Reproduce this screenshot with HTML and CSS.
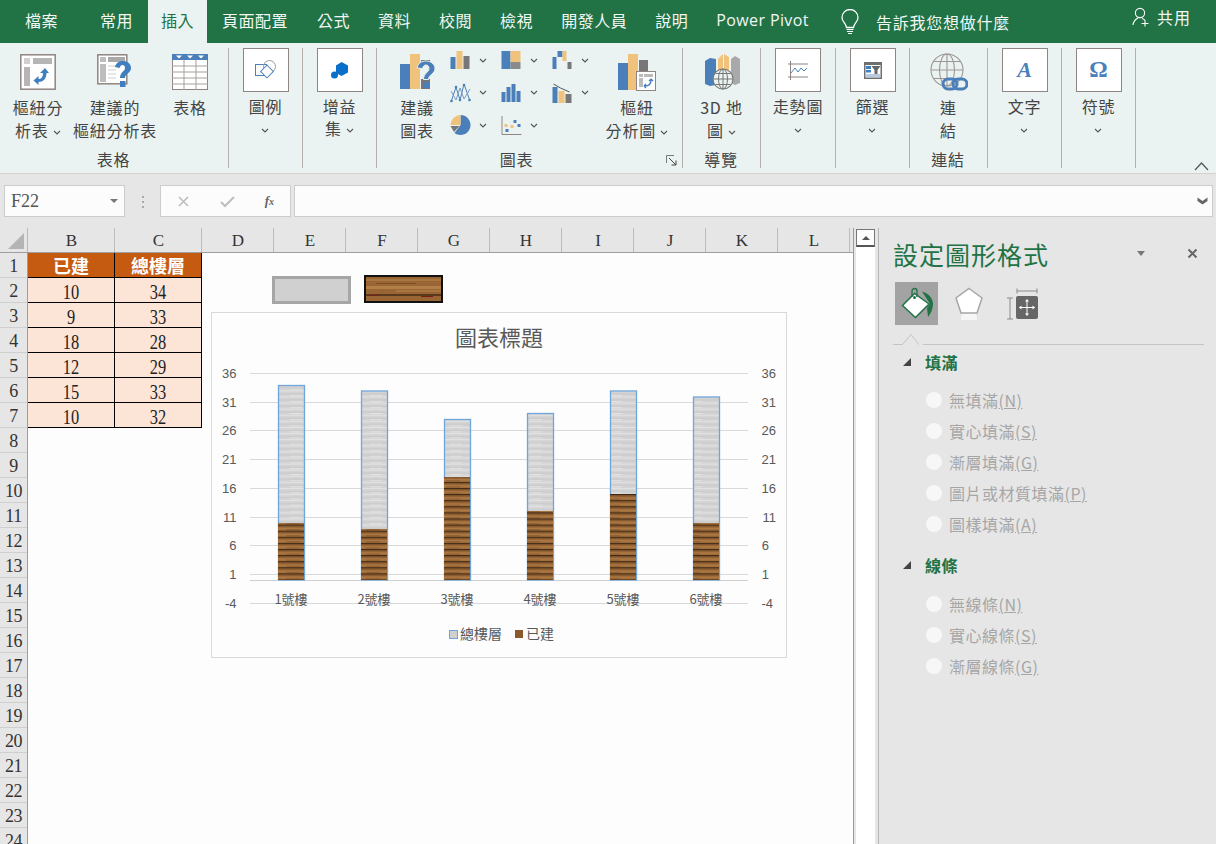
FILE: index.html
```html
<!DOCTYPE html>
<html lang="zh-Hant">
<head>
<meta charset="utf-8">
<title>Excel</title>
<link rel="stylesheet" href="styles.css">
</head>
<body>
<svg class="defs" width="0" height="0" aria-hidden="true">
  <defs>
    <symbol id="chev" viewBox="0 0 8 5"><polyline points="1,1 4,4 7,1" fill="none" stroke="#555" stroke-width="1.1"/></symbol>
    <pattern id="wood" width="40" height="6.1" patternUnits="userSpaceOnUse">
      <rect width="40" height="6.1" fill="#a06c3a"/>
      <rect y="0" width="40" height="1.2" fill="#3f2a16"/>
      <rect y="1.2" width="40" height="1" fill="#7a5029"/>
      <rect y="3.4" width="40" height="1.3" fill="#ad7a44"/>
      <rect x="6" y="4.6" width="14" height="1" fill="#8a5c30"/>
    </pattern>
    <pattern id="stone" width="40" height="6.1" patternUnits="userSpaceOnUse">
      <rect width="40" height="6.1" fill="#d4d4d4"/>
      <rect y="0" width="40" height="1" fill="#e2e2e2"/>
      <rect y="3" width="40" height="1" fill="#c8c8c8"/>
      <rect x="10" y="4.6" width="12" height="0.8" fill="#e6e6e6"/>
    </pattern>
    <pattern id="woodwide" width="75" height="24" patternUnits="userSpaceOnUse">
      <rect width="75" height="24" fill="#9a6534"/>
      <rect y="2" width="75" height="2" fill="#a8763f"/>
      <rect x="10" y="6" width="40" height="1" fill="#7b4e26"/>
      <rect y="9" width="75" height="3" fill="#b27f49"/>
      <rect x="30" y="13" width="45" height="2" fill="#a8763f"/>
      <rect y="17" width="75" height="2" fill="#5a3a1c"/>
      <rect x="3" y="18" width="9" height="1" fill="#7a1f14"/>
      <rect x="55" y="19" width="12" height="1" fill="#7a1f14"/>
    </pattern>
  </defs>
</svg>

<header class="tabbar">
  <nav class="tabs">
    <span class="tab tab-file">檔案</span>
    <span class="tab">常用</span>
    <span class="tab active">插入</span>
    <span class="tab tab4">頁面配置</span>
    <span class="tab">公式</span>
    <span class="tab">資料</span>
    <span class="tab">校閱</span>
    <span class="tab">檢視</span>
    <span class="tab">開發人員</span>
    <span class="tab">說明</span>
    <span class="tab tab-latin">Power Pivot</span>
  </nav>
  <div class="tell">
    <svg width="18" height="26" viewBox="0 0 18 26"><path d="M5.5 18.5C5 14 1 13 1 8.5a8 8 0 0 1 16 0c0 4.500-4 5.500-4.500 10z" fill="none" stroke="#fff" stroke-width="1.3"/><path d="M5.500 20.500h7M6 22.500h6M7 24.500h4" stroke="#fff" stroke-width="1.200"/></svg>
    <span>告訴我您想做什麼</span>
  </div>
  <div class="share">
    <svg width="18" height="20" viewBox="0 0 18 20"><circle cx="8" cy="6" r="4.600" fill="none" stroke="#fff" stroke-width="1.100"/><path d="M1 18c.5-4 3-6 5-7M10 11.500c1 .3 2 .8 2.700 1.500" fill="none" stroke="#fff" stroke-width="1.100"/><path d="M13 13v6.500M9.500 16.500h7" stroke="#fff" stroke-width="1.100"/></svg>
    <span>共用</span>
  </div>
</header>

<section class="ribbon">
  <div class="group g1">
    <div class="tools t1">
      <div class="btn b1">
        <div class="ico">
          <svg width="36" height="36" viewBox="0 0 36 36"><rect x=".8" y=".8" width="34.400" height="34.400" fill="#fff" stroke="#8f8582" stroke-width="1.500"/><rect x="4" y="4" width="6" height="6" fill="#cfcfcf"/><rect x="13" y="4" width="19" height="6" fill="#b5b5b5"/><rect x="4" y="13" width="6" height="19" fill="#b5b5b5"/><path d="M25 14l4 5h-2.500c0 6-3.500 9-8 9v3l-5-4.500 5-4.500v3c3 0 4.500-2 4.500-6H20z" fill="#3f7fc0"/></svg>
        </div>
        <div class="lbl">樞紐分<br>析表 <svg class="chev"><use href="#chev"/></svg></div>
      </div>
      <div class="btn b2">
        <div class="ico">
          <svg width="36" height="36" viewBox="0 0 36 36"><rect x=".8" y=".8" width="29" height="29" fill="#fff" stroke="#8f8582" stroke-width="1.500"/><rect x="3" y="3" width="6" height="5" fill="#bdbdbd"/><rect x="11" y="3" width="17" height="5" fill="#a9a9a9"/><rect x="3" y="10" width="6" height="18" fill="#bdbdbd"/><path d="M11 12h13M11 16h8M11 20h8M11 24h8" stroke="#cfcfcf"/><path d="M18 13c1-4 4-6 8-6s8 2.500 8 7c0 5-6 5.500-6 10h-5c0-6 5-6.500 5-10 0-2-1-3-2.500-3s-2.500 1-3 3z" fill="#3f7fc0"/><rect x="23" y="27" width="5.500" height="6" fill="#3f7fc0"/></svg>
        </div>
        <div class="lbl">建議的<br>樞紐分析表</div>
      </div>
      <div class="btn b3">
        <div class="ico">
          <svg width="36" height="36" viewBox="0 0 36 36"><rect x=".5" y=".5" width="35" height="35" fill="#fff" stroke="#8f8582"/><rect width="36" height="6" fill="#4a7fba"/><path d="M4 1.500h6l-3 3zM15 1.500h6l-3 3zM26 1.500h6l-3 3z" fill="#fff"/><path d="M12 6v30M24 6v30M0 12h36M0 18h36M0 24h36M0 30h36" stroke="#a79f9c"/></svg>
        </div>
        <div class="lbl">表格</div>
      </div>
    </div>
    <div class="grp-label">表格</div>
  </div>

  <div class="group g2">
    <div class="tools">
      <div class="btn boxed">
        <div class="box">
          <svg width="22" height="20" viewBox="0 0 22 20"><rect x=".5" y="4.500" width="11" height="11" fill="none" stroke="#4a7fba"/><circle cx="14.500" cy="6.500" r="6" fill="none" stroke="#a09a98"/><rect x="7.500" y="7" width="9" height="9" transform="rotate(45 12 11.500)" fill="#fff" stroke="#4a7fba"/></svg>
        </div>
        <div class="lbl">圖例<br><svg class="chev"><use href="#chev"/></svg></div>
      </div>
    </div>
  </div>

  <div class="group g3">
    <div class="tools">
      <div class="btn boxed">
        <div class="box">
          <svg width="17" height="17" viewBox="0 0 17 17"><path d="M10.500 0l6.500 3.500v7L10.500 14 5 11V3.500z" fill="#0a6fc9"/><circle cx="3.500" cy="13" r="3.500" fill="#0a6fc9"/></svg>
        </div>
        <div class="lbl">增益<br>集 <svg class="chev"><use href="#chev"/></svg></div>
      </div>
    </div>
  </div>

  <div class="group g4">
    <div class="tools t4">
      <div class="btn b4a">
        <div class="ico">
          <svg width="36" height="38" viewBox="0 0 36 38"><rect x="0" y="11" width="10" height="25" fill="#4a7fba"/><rect x="10" y="1" width="10" height="35" fill="#f0c27c"/><rect x="21" y="7" width="9" height="2" fill="#777"/><rect x="21" y="26" width="9" height="10" fill="#777"/><path d="M17 15c1-5 5-7 9-7s9 2.500 9 7.500c0 5.500-6.500 6-6.500 11h-5c0-6.500 5.500-7 5.500-11 0-2-1-3.500-3-3.500s-3 1.500-3.500 3.500z" fill="#4a7fba" stroke="#eaf2f0"/><rect x="23.500" y="29" width="5.500" height="6" fill="#4a7fba"/></svg>
        </div>
        <div class="lbl">建議<br>圖表</div>
      </div>
      <div class="mini-grid">
        <div class="mini"><svg width="20" height="18" viewBox="0 0 20 18"><rect y="6" width="5" height="12" fill="#4a7fba"/><rect x="6" y="0" width="6" height="18" fill="#f0c27c"/><rect x="13" y="5" width="6" height="13" fill="#777"/></svg><svg class="chev"><use href="#chev"/></svg></div>
        <div class="mini"><svg width="20" height="19" viewBox="0 0 20 19"><rect width="9" height="18" fill="#4a7fba"/><rect x="9" width="10" height="11" fill="#f0c27c"/><rect x="9" y="11" width="10" height="7" fill="#8a8a8a"/></svg><svg class="chev"><use href="#chev"/></svg></div>
        <div class="mini"><svg width="20" height="18" viewBox="0 0 20 18"><path d="M0 6h4v12H0z" fill="#4a7fba"/><path d="M5 0h5v6H5z" fill="#4a7fba"/><path d="M10 0h4v10h-4z" fill="#f0c27c"/><path d="M15 11h4v7h-4z" fill="#777"/></svg><svg class="chev"><use href="#chev"/></svg></div>
        <div class="mini"><svg width="21" height="20" viewBox="0 0 21 20"><polyline points="1,19 6,4 10,17 14,1 20,18" fill="none" stroke="#4a7fba"/><polyline points="1,8 6,17 10,5 14,16 20,6" fill="none" stroke="#7a9cc4"/><g fill="#4a7fba"><circle cx="1.500" cy="18" r="1.300"/><circle cx="6" cy="4" r="1.300"/><circle cx="10" cy="17" r="1.300"/><circle cx="14" cy="2" r="1.300"/><circle cx="19.500" cy="17" r="1.300"/></g></svg><svg class="chev"><use href="#chev"/></svg></div>
        <div class="mini"><svg width="20" height="18" viewBox="0 0 20 18"><path d="M0 8h4v10H0zM5 3h4v15H5zM10 0h4v18h-4zM15 7h4v11h-4z" fill="#4a7fba"/></svg><svg class="chev"><use href="#chev"/></svg></div>
        <div class="mini"><svg width="20" height="20" viewBox="0 0 20 20"><rect y="4" width="5" height="16" fill="#4a7fba"/><rect x="6" y="8" width="6" height="12" fill="#f0c27c"/><rect x="13" y="11" width="6" height="9" fill="#777"/><polyline points="1,1 8,5 17,9" fill="none" stroke="#555"/></svg><svg class="chev"><use href="#chev"/></svg></div>
        <div class="mini"><svg width="20" height="20" viewBox="0 0 20 20"><path d="M10 0a10 10 0 1 1-6 18l6-8z" fill="#4a7fba"/><path d="M10 0v10H0A10 10 0 0 1 10 0z" fill="#f0c27c"/><path d="M0 11h9l-5.500 6z" fill="#777"/></svg><svg class="chev"><use href="#chev"/></svg></div>
        <div class="mini"><svg width="20" height="19" viewBox="0 0 20 19"><path d="M.5 0v18.500H20" fill="none" stroke="#8f8582"/><path d="M3 8h3v3H3zM9 9h3v3H9z" fill="#f0c27c"/><path d="M12 4h3v3h-3zM16 8h3v3h-3zM4 13h3v3H4z" fill="#4a7fba"/></svg><svg class="chev"><use href="#chev"/></svg></div>
      </div>
      <div class="btn b4b">
        <div class="ico">
          <svg width="38" height="38" viewBox="0 0 38 38"><rect x="0" y="10" width="10" height="27" fill="#4a7fba"/><rect x="10" y="1" width="10" height="36" fill="#f0c27c"/><rect x="21" y="7" width="9" height="13" fill="#777"/><rect x="18.500" y="18.500" width="19" height="19" fill="#fff" stroke="#8f8582"/><rect x="21" y="21" width="4" height="3" fill="#bbb"/><rect x="26" y="21" width="9" height="3" fill="#bbb"/><rect x="21" y="25" width="4" height="9" fill="#bbb"/><path d="M27 33c4 0 6-2 6-6M33 26l-2 2M33 26l2 2M26 33l2-2M26 33l2 2" fill="none" stroke="#3f7fc0" stroke-width="1.300"/></svg>
        </div>
        <div class="lbl">樞紐<br>分析圖 <svg class="chev"><use href="#chev"/></svg></div>
      </div>
    </div>
    <div class="grp-label gl4">圖表<svg class="launcher" width="11" height="11" viewBox="0 0 11 11"><path d="M.5 8V.5H8" fill="none" stroke="#777"/><path d="M3 3l7 7M10 5.500V10H5.500" fill="none" stroke="#444"/></svg></div>
  </div>

  <div class="group g5">
    <div class="tools">
      <div class="btn b5">
        <div class="ico">
          <svg width="36" height="36" viewBox="0 0 36 36"><path d="M1 7l5-3 6 1v26l-6 1-5-2z" fill="#4a7fba"/><path d="M14 5l5-5v22l-5 3z" fill="#f0c27c"/><path d="M20 0l5 3v19h-5z" fill="#f0c27c"/><path d="M27 5l4-3 5 3v24l-5 2-4-2z" fill="#a9a9a9"/><circle cx="19" cy="25" r="10" fill="#eaf3f1" stroke="#777" stroke-width="1.100"/><ellipse cx="19" cy="25" rx="4.500" ry="10" fill="none" stroke="#777"/><path d="M9 25h20M19 15v20M11.500 19.500h15M11.500 30.500h15" stroke="#777" fill="none"/></svg>
        </div>
        <div class="lbl">3D 地<br>圖 <svg class="chev"><use href="#chev"/></svg></div>
      </div>
    </div>
    <div class="grp-label">導覽</div>
  </div>

  <div class="group g6">
    <div class="tools">
      <div class="btn boxed">
        <div class="box">
          <svg width="20" height="19" viewBox="0 0 20 19"><path d="M2.500 0v19M0 3h20M0 16h20" stroke="#8f8582" fill="none"/><polyline points="3,12 7,7 10,11 13,7 16,10 19,7" fill="none" stroke="#4a7fba"/></svg>
        </div>
        <div class="lbl nowrap">走勢圖<br><svg class="chev"><use href="#chev"/></svg></div>
      </div>
    </div>
  </div>

  <div class="group g7">
    <div class="tools">
      <div class="btn boxed">
        <div class="box">
          <svg width="18" height="17" viewBox="0 0 18 17"><rect width="18" height="17" fill="#6f6f6f"/><rect x="1.500" y="3" width="15" height="12.500" fill="#fff"/><rect x="2" y="4" width="5" height="3" fill="#3f7fc0"/><rect x="2" y="8" width="5" height="2.500" fill="#3f7fc0"/><rect x="2" y="12" width="14" height="3" fill="#b7cbe0"/><path d="M7.500 4h9L13.500 8v4h-3V8z" fill="#666"/></svg>
        </div>
        <div class="lbl">篩選<br><svg class="chev"><use href="#chev"/></svg></div>
      </div>
    </div>
  </div>

  <div class="group g8">
    <div class="tools">
      <div class="btn b8">
        <div class="ico">
          <svg width="38" height="38" viewBox="0 0 38 38"><g fill="none" stroke="#9d9795" stroke-width="1.100"><circle cx="17" cy="17" r="16"/><ellipse cx="17" cy="17" rx="7.500" ry="16"/><path d="M17 1v32M1 17h32M4 8.500h26M4 25.500h26"/></g><rect x="13" y="26" width="14" height="10" rx="5" fill="none" stroke="#4a7fba" stroke-width="3"/><rect x="23" y="26" width="14" height="10" rx="5" fill="none" stroke="#4a7fba" stroke-width="3"/></svg>
        </div>
        <div class="lbl">連<br>結</div>
      </div>
    </div>
    <div class="grp-label">連結</div>
  </div>

  <div class="group g9">
    <div class="tools">
      <div class="btn boxed">
        <div class="box"><span class="glyph-a">A</span></div>
        <div class="lbl">文字<br><svg class="chev"><use href="#chev"/></svg></div>
      </div>
    </div>
  </div>

  <div class="group g10">
    <div class="tools">
      <div class="btn boxed">
        <div class="box"><span class="glyph-o">Ω</span></div>
        <div class="lbl">符號<br><svg class="chev"><use href="#chev"/></svg></div>
      </div>
    </div>
  </div>

  <svg class="collapse" width="15" height="9" viewBox="0 0 15 9"><polyline points="1,8 7.500,1 14,8" fill="none" stroke="#555" stroke-width="1.200"/></svg>
</section>

<section class="formula">
  <div class="namebox"><span>F22</span><i class="tri"></i></div>
  <div class="dots"><b></b><b></b><b></b></div>
  <div class="fxbox">
    <svg width="13" height="13" viewBox="0 0 13 13"><path d="M2 2l9 9M11 2l-9 9" stroke="#bdbdbd" stroke-width="1.600"/></svg>
    <svg width="15" height="13" viewBox="0 0 15 13"><path d="M1 7l4 4 9-9" fill="none" stroke="#bdbdbd" stroke-width="2"/></svg>
    <span class="fx">f<small>x</small></span>
  </div>
  <div class="input"><svg width="11" height="8" viewBox="0 0 11 8"><path d="M.5 .5L5.500 4l5-3.500V4l-5 3.500L.5 4z" fill="#666"/></svg></div>
</section>

<main class="workspace">
  <div class="sheet">
    <div class="colhead">
      <div class="corner"><i></i></div>
      <div class="col wide">B</div><div class="col wide">C</div>
      <div class="col">D</div><div class="col">E</div><div class="col">F</div><div class="col">G</div><div class="col">H</div><div class="col">I</div><div class="col">J</div><div class="col">K</div><div class="col">L</div>
    </div>
    <div class="sheet-body">
      <div class="rowhead">
        <div>1</div><div>2</div><div>3</div><div>4</div><div>5</div><div>6</div><div>7</div><div>8</div><div>9</div><div>10</div><div>11</div><div>12</div><div>13</div><div>14</div><div>15</div><div>16</div><div>17</div><div>18</div><div>19</div><div>20</div><div>21</div><div>22</div><div>23</div><div>24</div>
      </div>
      <div class="canvas">
        <div class="data">
          <div class="th">已建</div><div class="th">總樓層</div>
          <div class="td"><span>10</span></div><div class="td"><span>34</span></div>
          <div class="td"><span>9</span></div><div class="td"><span>33</span></div>
          <div class="td"><span>18</span></div><div class="td"><span>28</span></div>
          <div class="td"><span>12</span></div><div class="td"><span>29</span></div>
          <div class="td"><span>15</span></div><div class="td"><span>33</span></div>
          <div class="td"><span>10</span></div><div class="td"><span>32</span></div>
        </div>
        <div class="swatch sw-stone"></div>
        <div class="swatch sw-wood"><svg width="75" height="24"><rect width="75" height="24" fill="url(#woodwide)"/></svg></div>
        <div class="chart">
          <svg width="576" height="346" viewBox="211 312 576 346">
            <g stroke="#d9d9d9" stroke-width="1">
              <path d="M250 373.500H748M250 402.500H748M250 430.500H748M250 459.500H748M250 488.500H748M250 517.500H748M250 545.500H748M250 574.500H748M250 603.500H748"/>
              <path d="M250 580.500H748" stroke="#cfcfcf"/>
            </g>
            <g fill="url(#stone)" stroke="#6ea6dc" stroke-width="1.300">
              <rect x="278.500" y="385.500" width="26" height="194.500"/>
              <rect x="361.500" y="391" width="26" height="189"/>
              <rect x="444.500" y="419.500" width="26" height="160.500"/>
              <rect x="527.500" y="413.500" width="26" height="166.500"/>
              <rect x="610.500" y="391" width="26" height="189"/>
              <rect x="693.500" y="397" width="26" height="183"/>
            </g>
            <g fill="url(#wood)">
              <rect x="278" y="523" width="26" height="57"/>
              <rect x="361" y="529" width="26" height="51"/>
              <rect x="444" y="477" width="26" height="103"/>
              <rect x="527" y="511" width="26" height="69"/>
              <rect x="610" y="494" width="26" height="86"/>
              <rect x="693" y="523" width="26" height="57"/>
            </g>
            <g class="ax" text-anchor="end">
              <text x="236.500" y="378">36</text><text x="236.500" y="407">31</text><text x="236.500" y="435">26</text><text x="236.500" y="464">21</text><text x="236.500" y="493">16</text><text x="236.500" y="522">11</text><text x="236.500" y="550">6</text><text x="236.500" y="579">1</text><text x="236.500" y="608">-4</text>
            </g>
            <g class="ax" text-anchor="end">
              <text x="776" y="378">36</text><text x="776" y="407">31</text><text x="776" y="435">26</text><text x="776" y="464">21</text><text x="776" y="493">16</text><text x="776" y="522">11</text><text x="769" y="550">6</text><text x="769" y="579">1</text><text x="773" y="608">-4</text>
            </g>
            <g class="cat" text-anchor="middle">
              <text x="291" y="604">1號樓</text><text x="374" y="604">2號樓</text><text x="457" y="604">3號樓</text><text x="540" y="604">4號樓</text><text x="623" y="604">5號樓</text><text x="706" y="604">6號樓</text>
            </g>
            <text class="ctitle" x="499" y="345.500" text-anchor="middle">圖表標題</text>
            <rect x="449.500" y="630.500" width="8" height="8" fill="#d0d0d0" stroke="#6ea6dc"/>
            <text class="leg" x="460" y="639">總樓層</text>
            <rect x="515" y="630" width="8" height="8" fill="#8a5a2e"/>
            <text class="leg" x="526" y="639">已建</text>
          </svg>
        </div>
      </div>
    </div>
  </div>

  <div class="vscroll"><div class="sb-btn"><i></i></div></div>

  <aside class="pane">
    <div class="pane-head">
      <h2>設定圖形格式</h2>
      <i class="pane-tri"></i>
      <svg class="pane-x" width="11" height="11" viewBox="0 0 11 11"><path d="M1.500 1.500l8 8M9.500 1.500l-8 8" stroke="#666" stroke-width="2"/></svg>
    </div>
    <div class="pane-icons">
      <div class="pi selected">
        <svg width="34" height="34" viewBox="0 0 34 34"><path d="M14.500 6.500L2.500 18.500 15.500 30.500 29 17z" fill="#fff" stroke="#217346" stroke-width="1.500"/><path d="M12 10V4a2.500 2.500 0 0 1 5 0v6" fill="none" stroke="#217346" stroke-width="1.300"/><circle cx="14.500" cy="10.500" r="1.500" fill="#217346"/><path d="M22 4.500C28 6 33 11 33 17 33 22 31 26 28 30L27 21 30 17z" fill="#217346"/></svg>
      </div>
      <div class="pi">
        <svg width="28" height="34" viewBox="0 0 28 34"><path d="M7 26h14l1 7H6z" fill="#f6f6f6"/><path d="M14 1.500L27 11 22 26H6L1 11z" fill="#fff" stroke="#a6a6a6" stroke-width="1.500"/></svg>
      </div>
      <div class="pi pi3">
        <svg width="31" height="32" viewBox="0 0 31 32"><path d="M10 3h20M10 .5v5M30 .5v5M0 10h6M0 31h6M3 10v21" stroke="#8a8a8a" fill="none"/><rect x="9" y="8" width="22" height="23" rx="2" fill="#666"/><path d="M20 12v15M12.500 19.500h15" stroke="#fff"/><path d="M20 11l-2 2.500h4zM20 28l-2-2.500h4zM12 19.500l2.500-2v4zM28 19.500l-2.500-2v4z" fill="#fff"/></svg>
      </div>
    </div>
    <div class="pane-rule"><svg width="30" height="12" viewBox="0 0 30 12"><path d="M0 11.500h9.500L18 1.500l8 10" fill="none" stroke="#c4c4c4"/></svg></div>

    <div class="sec-title"><i></i>填滿</div>
    <div class="opts">
      <div class="opt"><b></b><span>無填滿<u>(N)</u></span></div>
      <div class="opt"><b></b><span>實心填滿<u>(S)</u></span></div>
      <div class="opt"><b></b><span>漸層填滿<u>(G)</u></span></div>
      <div class="opt"><b></b><span>圖片或材質填滿<u>(P)</u></span></div>
      <div class="opt"><b></b><span>圖樣填滿<u>(A)</u></span></div>
    </div>
    <div class="sec-title sec2"><i></i>線條</div>
    <div class="opts opts2">
      <div class="opt"><b></b><span>無線條<u>(N)</u></span></div>
      <div class="opt"><b></b><span>實心線條<u>(S)</u></span></div>
      <div class="opt"><b></b><span>漸層線條<u>(G)</u></span></div>
    </div>
  </aside>
</main>
</body>
</html>
```

FILE: styles.css
```css
* { box-sizing: border-box; }
html, body { margin: 0; padding: 0; }
body {
  width: 1216px; height: 844px; overflow: hidden;
  font-family: "Noto Sans CJK TC", "Liberation Sans", sans-serif;
  background: #e6e6e6; color: #444;
}
.defs { position: absolute; }

/* title tabs */
.tabbar { height: 43px; background: #217346; display: flex; color: #fff; font-size: 16px; letter-spacing: .5px; }
.tabs { display: flex; gap: 2px; padding-left: 12px; }
.tab { padding: 0 13px; height: 43px; line-height: 41px; color: #f2f7f4; }
.tab-file { margin-right: 14px; }
.tab4 { padding-right: 14px; }
.tab.active { background: #eaf3f1; color: #217346; }
.tab-latin { font-family: "Open Sans", "Liberation Sans", sans-serif; letter-spacing: .4px; }
.tell { display: flex; align-items: center; gap: 17px; margin-left: 19px; width: 291px; letter-spacing: .75px; color: #f2f7f4; }
.share { display: flex; align-items: center; gap: 7px; height: 33px; color: #f2f7f4; letter-spacing: 1px; }

/* ribbon */
.ribbon { height: 131px; background: #eaf3f1; display: flex; padding-top: 5px; border-bottom: 1px solid #d9cfcf; position: relative; }
.group { height: 120px; border-right: 1px solid #b5b0ae; display: flex; flex-direction: column; position: relative; }
.g1 { width: 229px; } .g2, .g3, .g7, .g9, .g10 { width: 74px; } .g4 { width: 306px; } .g5 { width: 78px; } .g6 { width: 75px; } .g8 { width: 78px; }
.tools { flex: 0 0 100px; display: flex; justify-content: center; }
.grp-label { text-align: center; font-size: 16px; line-height: 23px; color: #444; letter-spacing: .8px; padding-right: 1px; }
.gl4 { padding-right: 26px; }
.btn { display: flex; flex-direction: column; align-items: center; }
.ico { height: 48px; display: flex; align-items: center; justify-content: center; }
.lbl { font-size: 16px; line-height: 23px; text-align: center; white-space: nowrap; color: #444; letter-spacing: .8px; }
.chev { width: 8px; height: 5px; vertical-align: 2px; }
.t1 { justify-content: flex-start; }
.b1 { width: 76px; } .b2 { width: 78px; } .b3 { width: 72px; }
.boxed .box { width: 46px; height: 44px; background: #fff; border: 1px solid #8f8582; margin-bottom: 3px; display: flex; align-items: center; justify-content: center; }
.boxed .lbl { line-height: 22px; }
.t4 { justify-content: flex-start; padding-left: 5px; }
.b4a { width: 70px; }
.b4a .ico { padding-left: 2px; }
.b4b { width: 64px; }
.mini-grid { width: 153px; display: grid; grid-template-columns: 51px 51px 51px; grid-auto-rows: 32.500px; align-content: start; margin: -4px 2px 0 -2px; }
.mini { display: flex; align-items: center; gap: 8px; }
.mini svg:first-child { flex: 0 0 21px; }
.launcher { position: absolute; right: 5px; bottom: 2px; }
.glyph-a { font: italic 700 22px "Liberation Serif", serif; color: #4a7fba; }
.glyph-o { font: 700 23px "Liberation Serif", serif; color: #4a7fba; }
.collapse { position: absolute; right: 7px; bottom: 2px; }

/* formula bar */
.formula { height: 54px; background: #e6e6e6; display: flex; padding: 11px 3px 0 4px; align-items: flex-start; }
.namebox { width: 121px; height: 32px; background: #fcfcfc; border: 1px solid #ccc; display: flex; align-items: center; justify-content: space-between; padding: 0 6px; font: 18px "Liberation Serif", serif; color: #555; }
.tri { width: 0; height: 0; border: 4px solid transparent; border-top: 4px solid #777; border-bottom: 0; }
.dots { width: 35px; display: flex; flex-direction: column; align-items: center; gap: 3px; padding-top: 11px; }
.dots b { width: 2px; height: 2px; background: #aaa; }
.fxbox { width: 131px; height: 32px; background: #fcfcfc; border: 1px solid #ccc; display: flex; align-items: center; justify-content: space-between; padding: 0 16px; }
.fx { font: italic 700 13px "Liberation Serif", serif; color: #666; }
.fx small { font-size: 10px; }
.input { margin-left: 3px; flex: 1; height: 32px; background: #fcfcfc; border: 1px solid #ccc; display: flex; align-items: center; justify-content: flex-end; padding-right: 4px; }

/* sheet */
.workspace { display: flex; height: 616px; }
.sheet { width: 854px; height: 616px; background: #fdfdfd; border-right: 1px solid #9a9a9a; overflow: hidden; flex: none; }
.colhead { display: flex; height: 25px; background: #e6e6e6; border-bottom: 1px solid #9e9e9e; font: 17px/25px "Liberation Serif", serif; color: #333; }
.corner { width: 28px; border-right: 1px solid #b9b9b9; position: relative; }
.corner i { position: absolute; right: 3px; bottom: 3px; border: 8px solid transparent; border-right: 8px solid #b4b4b4; border-bottom: 8px solid #b4b4b4; }
.col { width: 72px; text-align: center; border-right: 1px solid #bdbdbd; padding-left: 1px; }
.col.wide { width: 87px; }
.sheet-body { display: flex; }
.rowhead { width: 28px; flex: none; background: #e6e6e6; border-right: 1px solid #9e9e9e; }
.rowhead div { height: 25px; text-align: center; font: 18px/26px "Liberation Serif", serif; letter-spacing: -.5px; color: #333; border-bottom: 1px solid #cfcfcf; }
.canvas { flex: 1; position: relative; height: 600px; }
.data { display: grid; grid-template-columns: 87px 87px; grid-auto-rows: 25px; width: 174px; }
.th { background: #c55a11; color: #fff; text-align: center; font-size: 18px; font-weight: 700; line-height: 25px; border-right: 1px solid #000; border-bottom: 1px solid #000; }
.td { background: #fce4d6; color: #222; text-align: center; font: 20px/26px "Liberation Serif", serif; border-right: 1px solid #000; border-bottom: 1px solid #000; }
.td span { display: inline-block; transform: scale(.82, 1.08); }
.swatch { position: absolute; width: 79px; height: 28px; }
.sw-stone { left: 244px; top: 23px; background: #d0d0d0; border: 3px solid #a6a6a6; }
.sw-wood { left: 336px; top: 22px; border: 2px solid #111; }
.sw-wood svg { display: block; width: 100%; height: 100%; }
.chart { position: absolute; left: 183px; top: 59px; width: 576px; height: 346px; background: #fdfdfd; outline: 1px solid #d9d9d9; outline-offset: -1px; }
.chart svg { display: block; }
.ax text { font: 13px "Liberation Sans", sans-serif; fill: #595959; }
.cat text { font: 13px "Noto Sans CJK TC", sans-serif; fill: #595959; }
.ctitle { font: 22px "Noto Sans CJK TC", sans-serif; fill: #595959; }
.leg { font: 14px "Noto Sans CJK TC", sans-serif; fill: #595959; }

.vscroll { width: 24px; flex: none; padding: 1px 2px 0; }
.sb-btn { width: 19px; height: 18px; background: #fdfdfd; border: 1px solid #777; border-bottom: 2px solid #555; display: flex; align-items: center; justify-content: center; box-shadow: 0 600px 0 600px #fff; clip-path: inset(0 0 -600px 0); }
.sb-btn i { border: 4px solid transparent; border-bottom: 4px solid #555; border-top: 0; }

/* task pane */
.pane { flex: 1; background: #e6e6e6; border-left: 1px solid #b5b5b5; padding-left: 15px; }
.pane-head { display: flex; align-items: center; height: 50px; margin-left: -1px; padding-top: 1px; }
.pane-head h2 { margin: 0; font-size: 25px; font-weight: 400; letter-spacing: 1px; color: #217346; width: 244px; }
.pane-tri { border: 4.500px solid transparent; border-top: 5px solid #777; border-bottom: 0; }
.pane-x { margin-left: 42px; }
.pane-icons { display: flex; height: 43px; margin: 4px 0 0 1px; }
.pi { height: 43px; display: flex; align-items: center; justify-content: center; }
.pi:nth-child(2) { width: 28px; margin-left: 17px; }
.pi:nth-child(3) { width: 31px; margin-left: 24px; }
.pi.selected { width: 43px; background: #a3a3a3; }
.pane-rule { height: 20px; margin-left: -1px; margin-right: 12px; border-bottom: 1px solid #c4c4c4; position: relative; }
.pane-rule svg { position: absolute; left: 0; bottom: -1px; background: #e6e6e6; }
.sec-title { color: #217346; font-size: 16px; font-weight: 700; height: 34px; line-height: 34px; padding-left: 31px; position: relative; letter-spacing: .5px; }
.sec-title i { position: absolute; left: 9px; top: 13px; border: 4.500px solid transparent; border-right: 4.500px solid #444; border-bottom: 4.500px solid #444; }
.sec2 { margin-top: 9px; }
.opts { padding-top: 5px; }
.opts2 { padding-top: 6px; }
.opt { height: 31px; display: flex; align-items: center; gap: 7px; padding-left: 31px; font-size: 16px; color: #a6a6a6; letter-spacing: .5px; }
.opt b { width: 16px; height: 16px; border-radius: 50%; background: #f7f7f7; flex: none; margin-left: 1px; }
.opt span { white-space: nowrap; }
```
